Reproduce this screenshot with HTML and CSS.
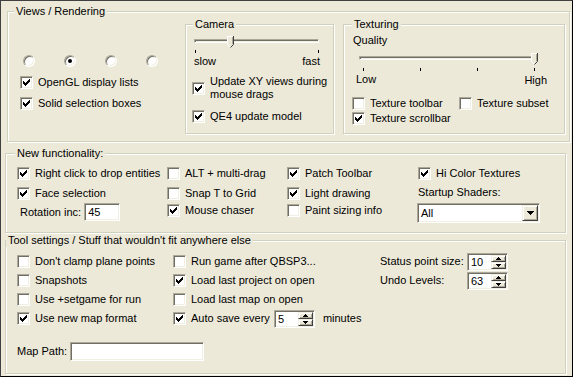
FILE: index.html
```html
<!DOCTYPE html>
<html lang="en">
<head>
    <meta charset="UTF-8">
    <title>Preferences</title>
    <link rel="stylesheet" href="styles.css">
</head>
<body>
    <div class="dialog">
        <fieldset class="group views">
            <legend>Views / Rendering</legend>
            <div class="views-row">
                <div class="views-left">
                    <div class="radios">
                        <span class="radio"></span>
                        <span class="radio on"></span>
                        <span class="radio"></span>
                        <span class="radio"></span>
                    </div>
                    <label class="check first"><span class="box"><svg class="tick" width="7" height="7"><use href="#chk"/></svg></span>OpenGL display lists</label>
                    <label class="check next"><span class="box"><svg class="tick" width="7" height="7"><use href="#chk"/></svg></span>Solid selection boxes</label>
                </div>

                <fieldset class="group sub camera">
                    <legend>Camera</legend>
                    <div class="slider">
                        <div class="track"></div>
                        <span class="thumb" style="left: 33px"><svg width="7" height="12"><path d="M0.5 0.5H6.5V8.5L3.5 11.5L0.5 8.5Z" fill="#ECE9D8"/><path d="M0.5 8.5V0.5H6" fill="none" stroke="#fff"/><path d="M6.5 0V8.5L3.5 11.5" fill="none" stroke="#404040"/><path d="M5.5 1V8.2" fill="none" stroke="#ACA899"/><path d="M0.5 8.5L3 11" fill="none" stroke="#fff"/></svg></span>
                    </div>
                    <div class="ticks"><i></i><i></i></div>
                    <div class="scale"><span>slow</span><span>fast</span></div>
                    <label class="check wrap"><span class="box"><svg class="tick" width="7" height="7"><use href="#chk"/></svg></span><span>Update XY views during<br>mouse drags</span></label>
                    <label class="check qe4"><span class="box"><svg class="tick" width="7" height="7"><use href="#chk"/></svg></span>QE4 update model</label>
                </fieldset>

                <fieldset class="group sub texturing">
                    <legend>Texturing</legend>
                    <div class="quality">Quality</div>
                    <div class="slider wide">
                        <div class="track"></div>
                        <span class="thumb" style="left: 172px"><svg width="7" height="12"><path d="M0.5 0.5H6.5V8.5L3.5 11.5L0.5 8.5Z" fill="#ECE9D8"/><path d="M0.5 8.5V0.5H6" fill="none" stroke="#fff"/><path d="M6.5 0V8.5L3.5 11.5" fill="none" stroke="#404040"/><path d="M5.5 1V8.2" fill="none" stroke="#ACA899"/><path d="M0.5 8.5L3 11" fill="none" stroke="#fff"/></svg></span>
                    </div>
                    <div class="ticks wide"><i></i><i></i><i></i><i></i></div>
                    <div class="scale wide"><span>Low</span><span class="high">High</span></div>
                    <div class="tex-checks">
                        <label class="check"><span class="box"></span>Texture toolbar</label>
                        <label class="check"><span class="box"></span>Texture subset</label>
                        <label class="check"><span class="box"><svg class="tick" width="7" height="7"><use href="#chk"/></svg></span>Texture scrollbar</label>
                    </div>
                </fieldset>
            </div>
        </fieldset>

        <fieldset class="group functions">
            <legend>New functionality:</legend>
            <div class="func-grid">
                <label class="check"><span class="box"><svg class="tick" width="7" height="7"><use href="#chk"/></svg></span>Right click to drop entities</label>
                <label class="check"><span class="box"></span>ALT + multi-drag</label>
                <label class="check"><span class="box"><svg class="tick" width="7" height="7"><use href="#chk"/></svg></span>Patch Toolbar</label>
                <label class="check"><span class="box"><svg class="tick" width="7" height="7"><use href="#chk"/></svg></span>Hi Color Textures</label>

                <label class="check"><span class="box"><svg class="tick" width="7" height="7"><use href="#chk"/></svg></span>Face selection</label>
                <label class="check"><span class="box"></span>Snap T to Grid</label>
                <label class="check"><span class="box"><svg class="tick" width="7" height="7"><use href="#chk"/></svg></span>Light drawing</label>
                <div class="caption">Startup Shaders:</div>

                <div class="rotation">Rotation inc:<span class="field small">45</span></div>
                <label class="check low"><span class="box"><svg class="tick" width="7" height="7"><use href="#chk"/></svg></span>Mouse chaser</label>
                <label class="check low"><span class="box"></span>Paint sizing info</label>
                <div class="select">
                    <span class="value">All</span>
                    <span class="btn drop"><svg width="7" height="4"><path d="M0 0h7v1h-1v1h-1v1h-1v1h-1v-1h-1v-1h-1v-1h-1z"/></svg></span>
                </div>
            </div>
        </fieldset>

        <fieldset class="group tools">
            <legend>Tool settings / Stuff that wouldn't fit anywhere else</legend>
            <div class="tools-grid">
                <label class="check"><span class="box"></span>Don't clamp plane points</label>
                <label class="check"><span class="box"></span>Run game after QBSP3...</label>
                <div class="num-row">
                    <span class="num-label">Status point size:</span>
                    <span class="spin"><span class="value">10</span><span class="arrows"><span class="btn"><svg width="5" height="3"><path d="M2 0h1v1h1v1h1v1h-5v-1h1v-1h1z"/></svg></span><span class="btn"><svg width="5" height="3"><path d="M0 0h5v1h-1v1h-1v1h-1v-1h-1v-1h-1z"/></svg></span></span></span>
                </div>

                <label class="check"><span class="box"></span>Snapshots</label>
                <label class="check"><span class="box"><svg class="tick" width="7" height="7"><use href="#chk"/></svg></span>Load last project on open</label>
                <div class="num-row">
                    <span class="num-label">Undo Levels:</span>
                    <span class="spin"><span class="value">63</span><span class="arrows"><span class="btn"><svg width="5" height="3"><path d="M2 0h1v1h1v1h1v1h-5v-1h1v-1h1z"/></svg></span><span class="btn"><svg width="5" height="3"><path d="M0 0h5v1h-1v1h-1v1h-1v-1h-1v-1h-1z"/></svg></span></span></span>
                </div>

                <label class="check"><span class="box"></span>Use +setgame for run</label>
                <label class="check"><span class="box"></span>Load last map on open</label>
                <div></div>

                <label class="check"><span class="box"><svg class="tick" width="7" height="7"><use href="#chk"/></svg></span>Use new map format</label>
                <div class="autosave">
                    <label class="check"><span class="box"><svg class="tick" width="7" height="7"><use href="#chk"/></svg></span>Auto save every</label>
                    <span class="spin"><span class="value">5</span><span class="arrows"><span class="btn"><svg width="5" height="3"><path d="M2 0h1v1h1v1h1v1h-5v-1h1v-1h1z"/></svg></span><span class="btn"><svg width="5" height="3"><path d="M0 0h5v1h-1v1h-1v1h-1v-1h-1v-1h-1z"/></svg></span></span></span>
                    <span class="unit">minutes</span>
                </div>
                <div></div>
            </div>
            <div class="map-path">Map Path:<span class="field path"></span></div>
        </fieldset>
    </div>

    <svg class="defs" width="0" height="0">
        <defs>
            <path id="chk" d="M0 2h1v1h1v1h1v-1h1v-1h1v-1h1v-1h1v3h-1v1h-1v1h-1v1h-1v1h-1v-1h-1v-1h-1z"/>
        </defs>
    </svg>
</body>
</html>
```

FILE: styles.css
```css
body {
    margin: 0;
    font-family: "Liberation Sans", Arial, sans-serif;
    font-size: 11px;
    line-height: 13px;
    color: #000;
}
.dialog {
    width: 573px;
    height: 377px;
    box-sizing: border-box;
    border: 1px solid #000;
    border-color: #404040 #000 #000 #404040;
    background: #ECE9D8;
    padding: 4px 0 0 4px;
    overflow: hidden;
}

/* group boxes */
.group {
    margin: 0;
    padding: 0;
    min-width: 0;
    min-inline-size: 0;
    border: 1px solid #D0D0BF;
    box-shadow: inset 1px 1px #fff, 1px 1px #fff;
    box-sizing: border-box;
}
.group legend {
    padding: 0 2px;
    line-height: 13px;
    background: #ECE9D8;
}
.views {
    margin-left: 2px;
    width: 563px;
}
.views > legend {
    margin-left: 6px;
}
.functions {
    margin-top: 5px;
    width: 561px;
}
.functions > legend {
    margin-left: 9px;
}
.tools {
    margin-top: 1px;
    width: 561px;
    padding-bottom: 12px;
}
.tools > legend {
    margin-left: 0;
}

/* checkboxes and radios */
.check {
    display: flex;
    align-items: center;
    gap: 5px;
    white-space: nowrap;
}
.box {
    flex: none;
    width: 13px;
    height: 13px;
    box-sizing: border-box;
    background: #fff;
    border: 1px solid;
    border-color: #ACA899 #fff #fff #ACA899;
    box-shadow: inset 1px 1px #716F64, inset -1px -1px #F1EFE2;
    display: flex;
    align-items: center;
    justify-content: center;
}
.tick {
    display: block;
    fill: #000;
}
.radio {
    width: 12px;
    height: 12px;
    box-sizing: border-box;
    border-radius: 50%;
    background: #fff;
    border: 1px solid;
    border-color: #ACA899 #fff #fff #ACA899;
    box-shadow: inset 1px 1px #716F64, inset -1px -1px #F1EFE2;
    display: flex;
    align-items: center;
    justify-content: center;
}
.radio.on::after {
    content: "";
    width: 4px;
    height: 4px;
    border-radius: 50%;
    background: #000;
}

/* views / rendering */
.views-row {
    display: flex;
    align-items: flex-start;
    padding-bottom: 7px;
}
.views-left {
    flex: none;
    width: 177px;
    box-sizing: border-box;
    padding: 37px 0 0 12px;
}
.radios {
    display: flex;
    gap: 29px;
    padding-left: 3px;
}
.check.first {
    margin-top: 9px;
}
.check.next {
    margin-top: 8px;
}
.sub {
    flex: none;
    height: 116px;
}
.camera {
    width: 149px;
}
.texturing {
    width: 222px;
    margin-left: 9px;
}
.camera > legend {
    margin-left: 7px;
}
.texturing > legend {
    margin-left: 8px;
}

/* sliders */
.slider {
    position: relative;
    width: 125px;
    height: 12px;
    margin: 5px 0 0 8px;
}
.slider.wide {
    width: 179px;
    margin: 6px 0 0 15px;
}
.track {
    position: relative;
    top: 3px;
    height: 4px;
    box-sizing: border-box;
    border: 1px solid;
    border-color: #ACA899 #fff #fff #ACA899;
    box-shadow: inset 1px 1px #716F64, inset -1px -1px #F1EFE2;
}
.thumb {
    position: absolute;
    top: 0;
}
.thumb svg {
    display: block;
}
.ticks {
    display: flex;
    justify-content: space-between;
    width: 125px;
    height: 3px;
    margin: 2px 0 0 8px;
    padding-left: 1px;
    box-sizing: border-box;
}
.ticks.wide {
    width: 179px;
    margin: 3px 0 0 15px;
    padding: 0 3px 0 4px;
}
.ticks i {
    width: 1px;
    height: 3px;
    background: #000;
}
.scale {
    display: flex;
    justify-content: space-between;
    width: 126px;
    margin: 2px 0 0 8px;
}
.scale.wide {
    width: 191px;
    margin: 2px 0 0 12px;
}
.scale .high {
    position: relative;
    top: 1px;
}
.check.wrap {
    margin: 7px 0 0 6px;
    white-space: normal;
}
.check.qe4 {
    margin: 9px 0 0 6px;
}
.quality {
    margin: 3px 0 0 9px;
}
.tex-checks {
    display: grid;
    grid-template-columns: 107px auto;
    row-gap: 2px;
    margin: 11px 0 0 8px;
}

/* new functionality */
.func-grid {
    display: grid;
    grid-template-columns: 150px 120px 131px 1fr;
    grid-template-rows: 20px 16px 19px;
    align-items: start;
    padding: 7px 0 10px 11px;
}
.check.low {
    margin-top: 1px;
}
.caption {
    margin-top: -1px;
}
.rotation {
    display: flex;
    align-items: center;
    gap: 3px;
    padding-left: 3px;
}
.field {
    display: block;
    height: 18px;
    box-sizing: border-box;
    background: #fff;
    border: 1px solid;
    border-color: #ACA899 #fff #fff #ACA899;
    box-shadow: inset 1px 1px #716F64, inset -1px -1px #F1EFE2;
    padding: 1px 3px;
    line-height: 14px;
}
.field.small {
    width: 36px;
}
.field.path {
    width: 134px;
    height: 19px;
}
.select {
    display: flex;
    width: 123px;
    height: 20px;
    margin-left: -1px;
    box-sizing: border-box;
    background: #fff;
    border: 1px solid;
    border-color: #ACA899 #fff #fff #ACA899;
    box-shadow: inset 1px 1px #716F64, inset -1px -1px #F1EFE2;
    padding: 1px;
}
.select .value {
    flex: 1;
    padding: 2px 0 0 2px;
}
.btn {
    display: flex;
    align-items: center;
    justify-content: center;
    box-sizing: border-box;
    background: #ECE9D8;
    border: 1px solid;
    border-color: #F1EFE2 #404040 #404040 #F1EFE2;
    box-shadow: inset 1px 1px #fff, inset -1px -1px #ACA899;
}
.btn svg {
    display: block;
    fill: #000;
}
.btn.drop {
    width: 16px;
    height: 16px;
}

/* tool settings */
.tools-grid {
    display: grid;
    grid-template-columns: 156px 207px 1fr;
    grid-template-rows: repeat(4, 13px);
    row-gap: 6px;
    align-items: center;
    padding: 8px 0 0 11px;
}
.num-row {
    display: flex;
    align-items: center;
}
.num-label {
    width: 87px;
}
.spin {
    display: flex;
    width: 41px;
    height: 18px;
    box-sizing: border-box;
    background: #fff;
    border: 1px solid;
    border-color: #ACA899 #fff #fff #ACA899;
    box-shadow: inset 1px 1px #716F64, inset -1px -1px #F1EFE2;
    padding: 1px;
}
.spin .value {
    flex: 1;
    padding: 1px 0 0 2px;
    line-height: 13px;
}
.arrows {
    display: flex;
    flex-direction: column;
    width: 15px;
}
.arrows .btn {
    height: 7px;
}
.autosave {
    display: flex;
    align-items: center;
}
.autosave .spin {
    margin-left: 4px;
}
.unit {
    margin-left: 8px;
}
.map-path {
    display: flex;
    align-items: center;
    gap: 3px;
    margin-top: 17px;
    padding-left: 11px;
}
.defs {
    display: block;
    width: 0;
    height: 0;
    overflow: hidden;
}
```
